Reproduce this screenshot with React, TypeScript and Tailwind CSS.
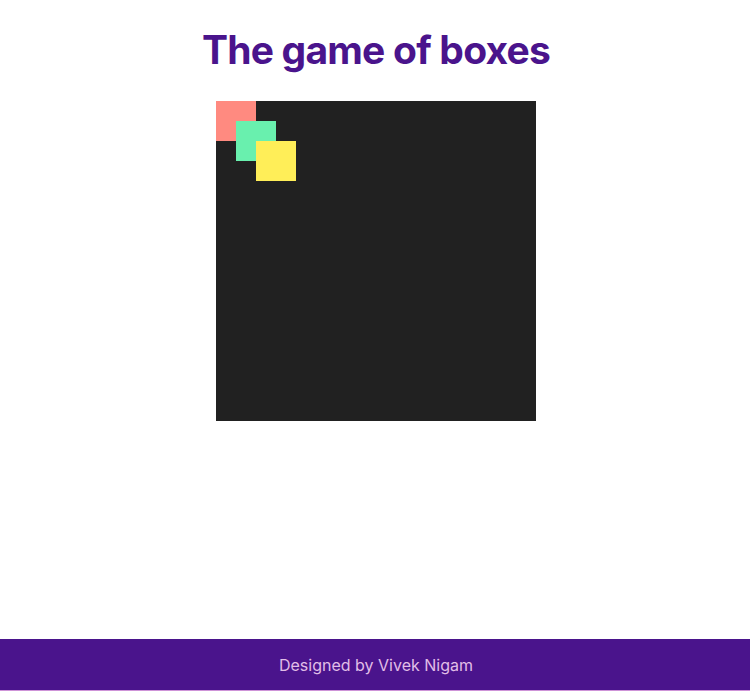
export default function App() {
  const boxes = [
    { color: "bg-[#ff8a80]", pos: "left-0 top-0" },
    { color: "bg-[#69f0ae]", pos: "left-[20px] top-[20px]" },
    { color: "bg-[#ffee58]", pos: "left-[40px] top-[40px]" },
  ];

  return (
    <div className="min-h-screen flex flex-col bg-white font-['Inter',sans-serif]">
      <main className="flex-1 flex flex-col items-center pl-[2px]">
        <h1 className="pt-[26px] mb-[27px] text-[39px] leading-[48px] font-bold tracking-[-0.02em] text-[#4a148c]">
          The game of boxes
        </h1>
        <div className="relative w-[320px] h-[320px] bg-[#212121]">
          {boxes.map((b, i) => (
            <div key={i} className={`absolute w-10 h-10 ${b.color} ${b.pos}`} />
          ))}
        </div>
      </main>
      <footer className="h-[52px] flex items-center justify-center bg-[#4a148c] border-b border-[#ce93d8] text-[#e1bee7] text-base pl-[2px]">
        Designed by Vivek Nigam
      </footer>
    </div>
  );
}
